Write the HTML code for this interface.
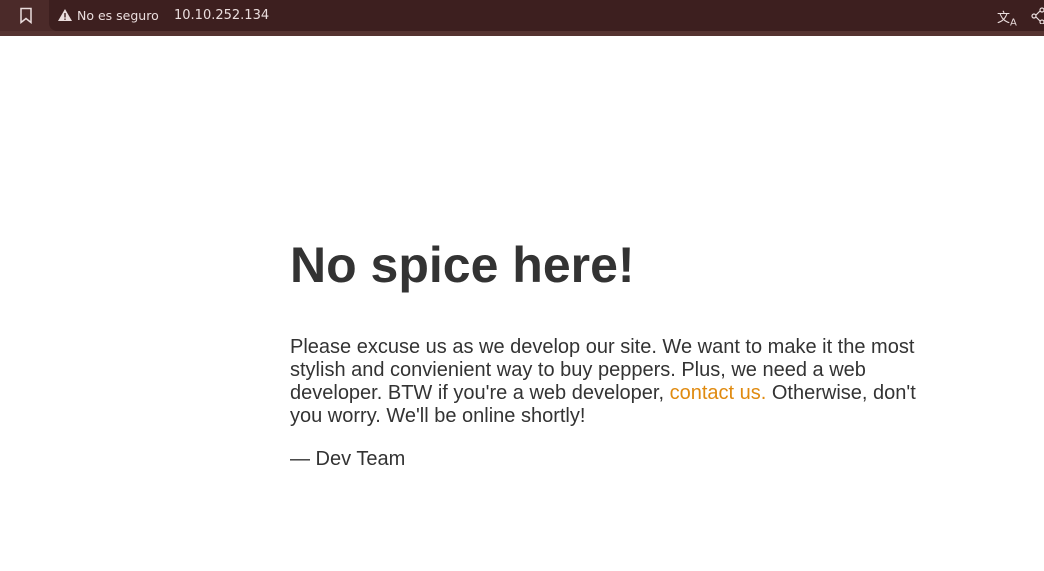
<!DOCTYPE html>
<html><head><meta charset="utf-8"><style>
*{margin:0;padding:0;box-sizing:border-box}
body{width:1044px;height:571px;overflow:hidden;background:#fff;font-family:"Liberation Sans",sans-serif;position:relative}
.bar{position:absolute;left:0;top:0;width:1044px;height:36px;background:#4b2a29}
.bar .under{position:absolute;left:0;top:31px;width:1044px;height:5px;background:#553331}
.url{position:absolute;left:49px;top:0;width:1000px;height:31px;background:#3d1f1f;border-radius:0 0 0 8px}
.bar span{position:absolute;color:#eadddd;font-family:"DejaVu Sans","Liberation Sans",sans-serif;font-size:13px;top:7px}
.main{position:absolute;left:290px;top:236px;width:640px;color:#333}
h1{font-size:50px;font-weight:bold;line-height:58px;margin-bottom:42px}
p{font-size:20px;line-height:23px;margin-bottom:20px}
a{color:#e08a0f;text-decoration:none}
</style></head><body>
<div class="bar"><div class="under"></div><div class="url"></div>
<svg style="position:absolute;left:19px;top:7px" width="14" height="17" viewBox="0 0 14 17"><path d="M2 1.5h10v14l-5-4-5 4z" fill="none" stroke="#eadddd" stroke-width="1.5"/></svg>
<svg style="position:absolute;left:58px;top:9px" width="14" height="13" viewBox="0 0 14 13"><path d="M7 0L14 12H0z" fill="#eadddd"/><rect x="6.3" y="4" width="1.4" height="4.5" fill="#3d1f1f"/><rect x="6.3" y="9.5" width="1.4" height="1.4" fill="#3d1f1f"/></svg>
<span style="left:77px;font-size:12.5px;top:8px">No es seguro</span>
<span style="left:174px;font-size:13px;top:8px">10.10.252.134</span>
<span style="left:997px;top:7px;font-size:13px">文<sub style="font-size:10px">A</sub></span>
<svg style="position:absolute;left:1031px;top:7px" width="13" height="17" viewBox="0 0 13 17"><circle cx="3" cy="9" r="2" fill="none" stroke="#eadddd" stroke-width="1.2"/><circle cx="11" cy="3" r="2" fill="none" stroke="#eadddd" stroke-width="1.2"/><circle cx="11" cy="15" r="2" fill="none" stroke="#eadddd" stroke-width="1.2"/><path d="M5 8l4-4M5 10l4 4" stroke="#eadddd" stroke-width="1.2"/></svg>
</div>
<div class="main">
<h1>No spice here!</h1>
<p>Please excuse us as we develop our site. We want to make it the most stylish and convienient way to buy peppers. Plus, we need a web developer. BTW if you're a web developer, <a href="#">contact us.</a> Otherwise, don't you worry. We'll be online shortly!</p>
<p>— Dev Team</p>
</div>
</body></html>
